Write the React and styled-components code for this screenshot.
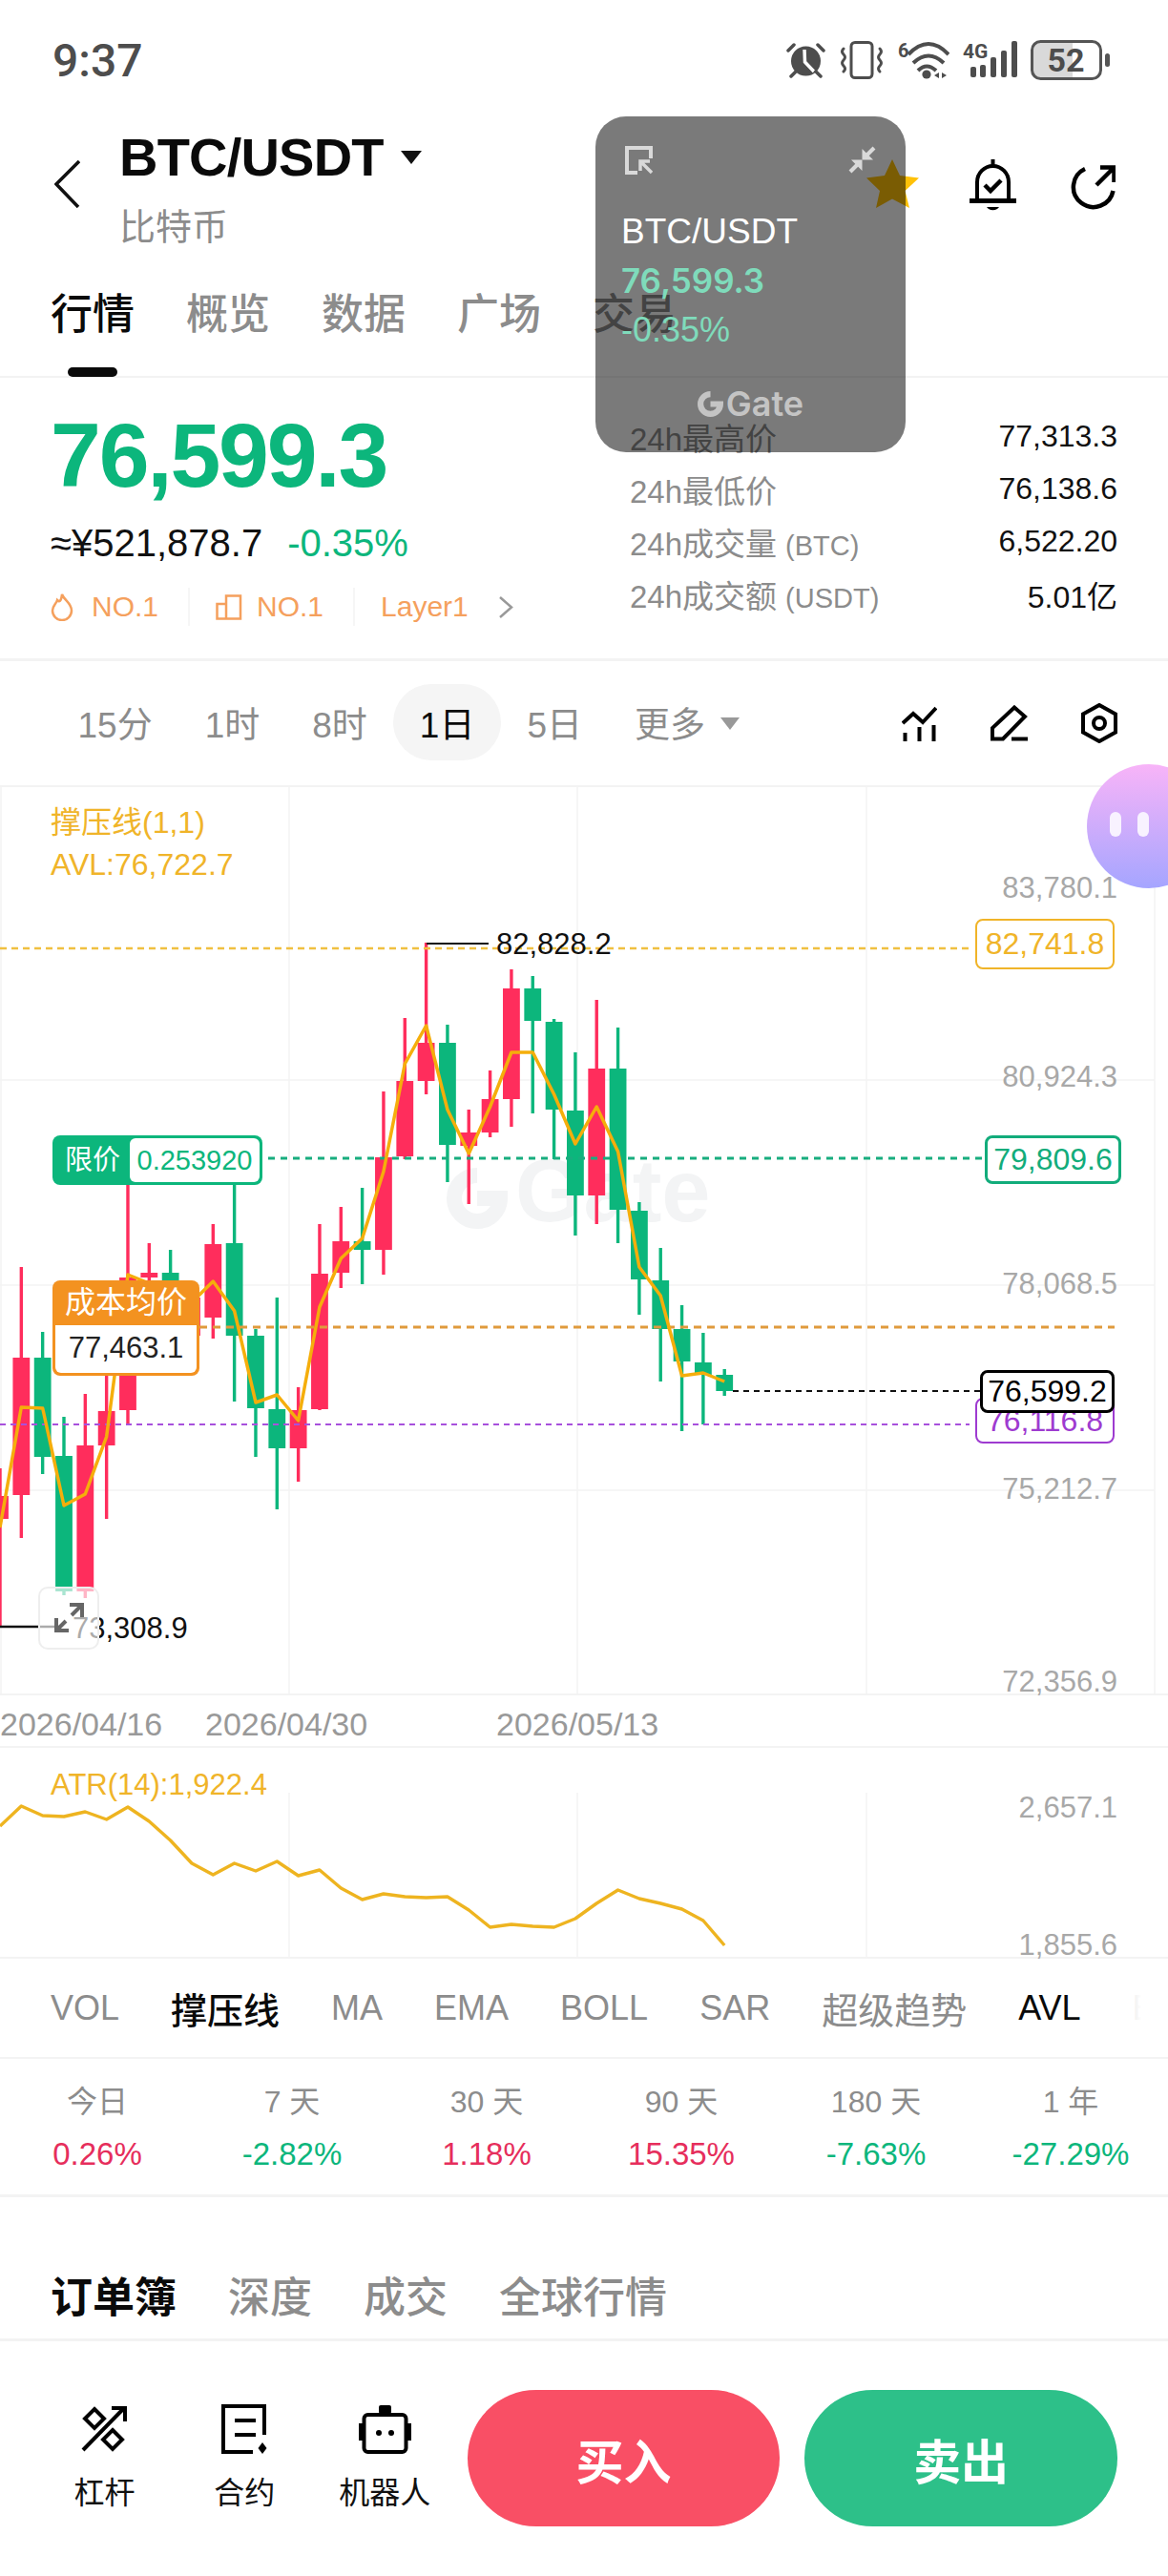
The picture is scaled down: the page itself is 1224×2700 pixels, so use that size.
import React from 'react';
import styled, { createGlobalStyle } from 'styled-components';

const SANS = `"Liberation Sans", "Noto Sans CJK SC", sans-serif`;
const GREEN = '#0cb67c';
const RED = '#ff2d5c';
const AMBER = '#f0b429';
const GRAY = '#8c8c8c';

const Global = createGlobalStyle`
  * { box-sizing: border-box; }
  html, body { margin: 0; padding: 0; background: #fff; }
  body { font-family: ${SANS}; }
`;

const Page = styled.div`
  position: relative;
  width: 1224px;
  height: 2700px;
  overflow: hidden;
  background: #fff;
  color: #111;
`;

/* ---------- status bar ---------- */
const StatusBar = styled.div`
  display: flex;
  justify-content: space-between;
  align-items: flex-start;
  height: 122px;
  padding: 42px 61px 0 55px;
`;
const Time = styled.div`
  font: 500 48px/50px Roboto, sans-serif;
  color: #4d4d4d;
  margin-top: -3px;
`;
const StatusIcons = styled.div`
  display: flex;
  align-items: center;
  gap: 14px;
  height: 42px;
`;

const AlarmIcon = () => (
  <svg width="41" height="38" viewBox="0 0 41 38" fill="none">
    <circle cx="20.5" cy="20" r="15.5" fill="#4d4d4d" />
    <path d="M19 8 L19.5 21 L29 31" stroke="#fff" strokeWidth="3.5" />
    <path d="M2 9 L8 3 M33 3 L39 9 M5 36 L10 31 M36 36 L31 31" stroke="#4d4d4d" strokeWidth="3.5" strokeLinecap="round" />
  </svg>
);
const VibrateIcon = () => (
  <svg width="48" height="40" viewBox="0 0 48 40" fill="none" stroke="#4d4d4d" strokeWidth="3">
    <rect x="13" y="1.5" width="22" height="37" rx="4" />
    <path d="M5 8 q-3 3 0 6 q3 3 0 6 q-3 3 0 6 q3 3 0 6" strokeLinecap="round" />
    <path d="M43 8 q3 3 0 6 q-3 3 0 6 q3 3 0 6 q-3 3 0 6" strokeLinecap="round" />
  </svg>
);
const WifiIcon = () => (
  <svg width="54" height="40" viewBox="0 0 54 40" fill="none">
    <text x="0" y="17" fontFamily="Roboto, sans-serif" fontWeight="700" fontSize="20" fill="#4d4d4d">6</text>
    <path d="M11 14 Q32 -8 53 14 M16 23 Q32 8 48 23 M21 31 Q30 22 40 31" stroke="#4d4d4d" strokeWidth="4" />
    <circle cx="30" cy="35" r="4.6" fill="#4d4d4d" />
    <path d="M43 33 V39 L38 36 Z M46 33 V39 L51 36 Z" fill="#4d4d4d" />
  </svg>
);
const SignalIcon = () => (
  <svg width="57" height="40" viewBox="0 0 57 40" fill="#4d4d4d">
    <text x="0" y="18" fontFamily="Roboto, sans-serif" fontWeight="700" fontSize="21">4G</text>
    <rect x="8" y="27" width="6" height="11" rx="2" />
    <rect x="18" y="25" width="6" height="13" rx="2" />
    <rect x="29" y="17" width="6" height="21" rx="2" />
    <rect x="40" y="10" width="6" height="28" rx="2" />
    <rect x="51" y="0" width="6" height="38" rx="2" />
  </svg>
);
const BatteryIcon = () => (
  <svg width="83" height="42" viewBox="0 0 83 42">
    <path d="M10 2 H44 V40 H10 Q2 40 2 32 V10 Q2 2 10 2 Z" fill="#d9d9d9" />
    <rect x="1.5" y="1.5" width="72" height="39" rx="9" fill="none" stroke="#555" strokeWidth="3" />
    <text x="37" y="33" textAnchor="middle" fontFamily="Roboto, sans-serif" fontWeight="700" fontSize="34" fill="#4d4d4d">52</text>
    <rect x="78" y="14" width="5" height="14" rx="2.5" fill="#555" />
  </svg>
);

/* ---------- header ---------- */
const Header = styled.header`
  display: flex;
  align-items: flex-start;
  height: 178px;
  padding: 13px 55px 0 57px;
`;
const BackIcon = styled.svg`
  margin-top: 33px;
  margin-right: 41px;
  flex: none;
`;
const TitleBlock = styled.div`
  display: flex;
  flex-direction: column;
`;
const TitleRow = styled.div`
  display: flex;
  align-items: center;
  gap: 18px;
`;
const Title = styled.div`
  font-size: 56px;
  line-height: 60px;
  font-weight: 700;
  letter-spacing: -0.8px;
  color: #0a0a0a;
`;
const Caret = styled.span`
  width: 0;
  height: 0;
  border-left: ${p => p.$w}px solid transparent;
  border-right: ${p => p.$w}px solid transparent;
  border-top: ${p => p.$h}px solid ${p => p.$color};
  margin-top: ${p => p.$mt || 0}px;
`;
const Subtitle = styled.div`
  margin-top: 21px;
  font-size: 38px;
  line-height: 44px;
  color: ${GRAY};
`;
const Actions = styled.div`
  display: flex;
  align-items: flex-start;
  margin-left: auto;
  padding-top: 32px;
`;
const ActionSlot = styled.div`
  display: flex;
  margin-left: ${p => p.$ml || 0}px;
  margin-top: ${p => p.$mt || 0}px;
`;

const StarIcon = () => (
  <svg width="55" height="51" viewBox="0 0 55 51">
    <path d="M27 0 L35 17 L55 19.5 L40.5 33 L45 51 L27 41.5 L10 51 L14 33 L0 19.5 L19 17 Z" fill="#ffc107" />
  </svg>
);
const BellIcon = () => (
  <svg width="49" height="55" viewBox="0 0 49 55" fill="none" stroke="#000">
    <path d="M8 42 V24 a16.5 17 0 0 1 33 0 V42" strokeWidth="4" />
    <path d="M0 43.5 H49" strokeWidth="5" />
    <path d="M24.5 0 V6" strokeWidth="4" />
    <path d="M16 27 L22 33 L33 22" strokeWidth="4.5" />
    <path d="M18 50 H31 A7 5 0 0 1 18 50 Z" fill="#000" strokeWidth="0" />
  </svg>
);
const ShareIcon = () => (
  <svg width="47" height="47" viewBox="0 0 47 47" fill="none" stroke="#000" strokeWidth="4.5">
    <path d="M15 4 A21 21 0 1 0 44.5 27" />
    <path d="M27 21 L45 3 M31 2.5 H45.5 V18" />
  </svg>
);

/* ---------- tabs ---------- */
const Tabs = styled.nav`
  display: flex;
  align-items: flex-start;
  gap: 54px;
  height: 96px;
  padding-left: 53px;
  border-bottom: 2px solid #f3f3f3;
`;
const Tab = styled.div`
  position: relative;
  font-size: 44px;
  line-height: 60px;
  font-weight: 500;
  color: ${p => (p.$active ? '#0a0a0a' : GRAY)};
`;
const TabMark = styled.span`
  position: absolute;
  left: 18px;
  top: 85px;
  width: 52px;
  height: 10px;
  border-radius: 5px;
  background: #0a0a0a;
`;

/* ---------- price ---------- */
const PriceSection = styled.section`
  display: flex;
  justify-content: space-between;
  height: 297px;
  padding: 31px 53px 0;
  border-bottom: 3px solid #f3f3f3;
`;
const PriceColumn = styled.div`
  display: flex;
  flex-direction: column;
`;
const BigPrice = styled.div`
  font-size: 95px;
  line-height: 100px;
  font-weight: 700;
  letter-spacing: -2.2px;
  color: ${GREEN};
`;
const FiatRow = styled.div`
  display: flex;
  gap: 26px;
  margin-top: 20px;
  font-size: 40px;
  line-height: 44px;
`;
const FiatChange = styled.span`
  color: ${GREEN};
`;
const TagRow = styled.div`
  display: flex;
  align-items: center;
  margin-top: 25px;
  height: 40px;
`;
const RankTag = styled.div`
  display: flex;
  align-items: center;
  gap: ${p => p.$gap}px;
  font-size: 30px;
  line-height: 40px;
  color: #f5a05d;
  padding-right: 31px;
  margin-right: 27px;
  border-right: 2px solid #f6f6f6;
  &:last-child { border: 0; margin: 0; padding: 0; }
`;
const StatsTable = styled.div`
  display: flex;
  flex-direction: column;
  width: 511px;
  padding-top: 3px;
`;
const StatRow = styled.div`
  display: flex;
  justify-content: space-between;
  align-items: center;
  height: 55px;
  font-size: 32px;
`;
const StatLabel = styled.span`
  font-size: 33px;
  color: ${GRAY};
`;
const StatValue = styled.span`
  color: #111;
`;
const StatUnit = styled.span`
  font-size: 29px;
  margin-left: 9px;
`;

/* ---------- toolbar ---------- */
const Toolbar = styled.div`
  display: flex;
  align-items: center;
  height: 132px;
  padding: 0 53px 0 54px;
  border-bottom: 2px solid #f3f3f3;
`;
const Interval = styled.div`
  display: flex;
  align-items: center;
  gap: 16px;
  height: 80px;
  padding: 0 27.5px;
  margin-top: -2px;
  font-size: 37px;
  border-radius: 40px;
  color: ${p => (p.$active ? '#0a0a0a' : GRAY)};
  background: ${p => (p.$active ? '#f5f5f5' : 'transparent')};
`;
const ToolIcons = styled.div`
  display: flex;
  align-items: center;
  gap: 56px;
  margin-left: auto;
`;

const IndicatorToolIcon = () => (
  <svg width="37" height="37" viewBox="0 0 37 37" fill="none" stroke="#000" strokeWidth="4">
    <path d="M1 18 L12 8 L22 17 L36 2" />
    <path d="M3.5 28 V37 M18.5 22 V37 M33.5 20 V37" />
  </svg>
);
const PenIcon = () => (
  <svg width="39" height="38" viewBox="0 0 39 38" fill="none" stroke="#000" strokeWidth="4">
    <path d="M25 2.5 L36 12 L13 35.5 H2 V24 Z" />
    <path d="M22 35.5 H39" />
  </svg>
);
const HexIcon = () => (
  <svg width="38" height="42" viewBox="0 0 38 42" fill="none" stroke="#000" strokeWidth="4">
    <path d="M19 2 L36 11.5 V30.5 L19 40 L2 30.5 V11.5 Z" />
    <circle cx="19" cy="21" r="6" />
  </svg>
);

/* ---------- chart ---------- */
const ChartArea = styled.div`
  position: relative;
  height: 952px;
  border-bottom: 2px solid #f3f3f3;
`;
const ChartSvg = styled.svg`
  position: absolute;
  inset: 0;
  display: block;
`;
const LegendBlock = styled.div`
  position: absolute;
  left: 53px;
  top: 15px;
  font-size: 32px;
  line-height: 44px;
  color: ${AMBER};
`;
const AxisValue = styled.div`
  position: absolute;
  right: 53px;
  top: ${p => p.$y}px;
  transform: translateY(-50%);
  font-size: 31px;
  line-height: 36px;
  color: #a8a8a8;
`;
const ExtremeValue = styled.div`
  position: absolute;
  left: ${p => p.$x}px;
  top: ${p => p.$y}px;
  transform: translateY(-50%);
  font-size: 31px;
  line-height: 36px;
  color: #111;
`;
const PriceTag = styled.div`
  position: absolute;
  left: ${p => p.$x}px;
  top: ${p => p.$y}px;
  width: ${p => p.$w}px;
  height: ${p => p.$h}px;
  display: flex;
  align-items: center;
  justify-content: center;
  font-size: 32px;
  color: ${p => p.$color};
  background: #fff;
  border: ${p => p.$bw || 2}px solid ${p => p.$color};
  border-radius: 8px;
`;
const LimitTag = styled.div`
  position: absolute;
  left: 55px;
  top: 365px;
  display: flex;
  width: 220px;
  height: 52px;
  background: ${GREEN};
  border-radius: 8px;
  padding: 3px;
`;
const LimitName = styled.div`
  width: 78px;
  font-size: 29px;
  line-height: 46px;
  color: #fff;
  text-align: center;
`;
const LimitValue = styled.div`
  flex: 1;
  font-size: 29px;
  line-height: 46px;
  color: ${GREEN};
  background: #fff;
  border-radius: 6px;
  text-align: center;
`;
const CostTag = styled.div`
  position: absolute;
  left: 55px;
  top: 517px;
  display: flex;
  flex-direction: column;
  width: 154px;
  height: 100px;
  background: #f39220;
  border-radius: 8px;
  padding: 0 3px 3px;
`;
const CostName = styled.div`
  height: 47px;
  font-size: 32px;
  line-height: 47px;
  color: #fff;
  text-align: center;
`;
const CostValue = styled.div`
  flex: 1;
  font-size: 31px;
  line-height: 47px;
  color: #222;
  background: #fff;
  border-radius: 0 0 6px 6px;
  text-align: center;
`;
const ExpandButton = styled.div`
  position: absolute;
  left: 40px;
  top: 838px;
  width: 64px;
  height: 66px;
  display: flex;
  align-items: center;
  justify-content: center;
  background: rgba(255, 255, 255, 0.65);
  border: 2px solid #eee;
  border-radius: 10px;
`;

const candles = [
  ['r', 1539, 1568, 1592, 1705], ['r', 1328, 1423, 1567, 1612], ['g', 1396, 1423, 1527, 1545],
  ['g', 1485, 1526, 1668, 1672], ['r', 1461, 1515, 1668, 1675], ['r', 1400, 1479, 1515, 1592],
  ['r', 1200, 1339, 1478, 1493], ['r', 1303, 1334, 1339, 1345], ['g', 1310, 1334, 1380, 1395],
  ['r', 1350, 1360, 1400, 1405], ['r', 1283, 1304, 1381, 1403], ['g', 1200, 1303, 1400, 1469],
  ['g', 1393, 1400, 1476, 1527], ['g', 1360, 1477, 1518, 1582], ['r', 1454, 1478, 1518, 1553],
  ['r', 1283, 1335, 1477, 1478], ['r', 1265, 1301, 1334, 1350], ['g', 1245, 1301, 1310, 1346],
  ['r', 1144, 1213, 1310, 1336], ['r', 1067, 1133, 1212, 1215], ['r', 988, 1093, 1133, 1147],
  ['g', 1074, 1093, 1200, 1239], ['r', 1163, 1187, 1201, 1262], ['r', 1122, 1152, 1187, 1192],
  ['r', 1016, 1036, 1152, 1181], ['g', 1023, 1036, 1070, 1167], ['g', 1068, 1071, 1163, 1215],
  ['g', 1103, 1164, 1253, 1295], ['r', 1048, 1120, 1253, 1283], ['g', 1077, 1120, 1268, 1303],
  ['g', 1260, 1269, 1341, 1378], ['g', 1308, 1342, 1393, 1448], ['g', 1368, 1393, 1427, 1500],
  ['g', 1397, 1428, 1441, 1493], ['g', 1435, 1441, 1458, 1463],
];
const STEP = 22.33;
const pointsOf = ys => ys.map((y, k) => `${(k * STEP).toFixed(1)},${y}`).join(' ');
const avl = [1601, 1475, 1476, 1578, 1566, 1506, 1336, 1345, 1350, 1365, 1343, 1374, 1470, 1462, 1489, 1370, 1319, 1298, 1228, 1115, 1075, 1163, 1209, 1160, 1103, 1103, 1147, 1199, 1160, 1207, 1328, 1358, 1442, 1439, 1448];
const atr = [1914, 1893, 1903, 1904, 1899, 1907, 1894, 1909, 1929, 1953, 1965, 1953, 1961, 1951, 1966, 1960, 1979, 1991, 1985, 1988, 1989, 1988, 2002, 2020, 2017, 2019, 2020, 2011, 1995, 1981, 1990, 1995, 2001, 2013, 2039];

const GateGlyph = ({ size, color }) => (
  <svg width={size} height={size} viewBox="0 0 26 26" fill="none" stroke={color} strokeWidth="6">
    <path d="M13 3 A10 10 0 1 0 23 13 H13" />
  </svg>
);

const PriceChart = () => (
  <ChartSvg width="1224" height="950" viewBox="0 825 1224 950">
    <g stroke="#f3f3f3" strokeWidth="1.5">
      {[1132, 1347, 1562].map(y => <line key={y} x1="0" x2="1210" y1={y} y2={y} />)}
      {[1, 303, 605, 908, 1210].map(x => <line key={x} x1={x} x2={x} y1="825" y2="1777" />)}
    </g>
    <g fill="none" stroke="#f3f4f5" strokeWidth="16">
      <path d="M500 1232 A24 24 0 1 0 524 1256 H500" />
    </g>
    <text x="540" y="1280" fontFamily={SANS} fontWeight="700" fontSize="92" fill="#f3f4f5">Gate</text>
    {candles.map(([c, wt, bt, bb, wb], k) => {
      const x = k * STEP;
      const fill = c === 'g' ? GREEN : RED;
      return (
        <g key={k} fill={fill}>
          <rect x={x - 1.7} y={wt} width="3.4" height={wb - wt} />
          <rect x={x - 8.9} y={bt} width="17.8" height={bb - bt} />
        </g>
      );
    })}
    <line x1="0" x2="1015" y1="994" y2="994" stroke="#f0c040" strokeWidth="2.5" strokeDasharray="7 5" />
    <line x1="281" x2="1032" y1="1214" y2="1214" stroke="#18ad7f" strokeWidth="3" strokeDasharray="7 6" />
    <line x1="209" x2="1168" y1="1391" y2="1391" stroke="#e09a3c" strokeWidth="3" strokeDasharray="8 6" />
    <line x1="0" x2="1016" y1="1493" y2="1493" stroke="#a850dc" strokeWidth="2.2" strokeDasharray="6 5" />
    <line x1="768" x2="1027" y1="1458" y2="1458" stroke="#111" strokeWidth="2.2" strokeDasharray="6 5" />
    <polyline points={pointsOf(avl)} fill="none" stroke="#f5ae0b" strokeWidth="3.5" strokeLinejoin="round" />
    <path d="M447 989 H512" stroke="#111" strokeWidth="2" />
    <path d="M0 1705 H62" stroke="#111" strokeWidth="2.5" />
  </ChartSvg>
);

/* ---------- axis + ATR ---------- */
const DateAxis = styled.div`
  position: relative;
  height: 55px;
  border-bottom: 2px solid #f3f3f3;
`;
const DateLabel = styled.span`
  position: absolute;
  left: ${p => p.$x}px;
  top: 10px;
  font-size: 34px;
  line-height: 40px;
  color: #999;
`;
const AtrPanel = styled.div`
  position: relative;
  height: 221px;
  border-bottom: 2px solid #f3f3f3;
`;
const AtrLegend = styled.div`
  position: absolute;
  left: 53px;
  top: 21px;
  font-size: 31px;
  line-height: 36px;
  color: ${AMBER};
`;

/* ---------- indicators ---------- */
const IndicatorBar = styled.div`
  position: relative;
  display: flex;
  align-items: center;
  gap: 54px;
  height: 105px;
  padding-left: 53px;
  overflow: hidden;
  white-space: nowrap;
  border-bottom: 2px solid #f3f3f3;
`;
const Indicator = styled.span`
  font-size: ${p => (p.$cjk ? 38 : 36)}px;
  color: ${p => (p.$on ? '#0a0a0a' : GRAY)};
  font-weight: ${p => (p.$on && p.$cjk ? 500 : 400)};
`;
const IndicatorFade = styled.div`
  position: absolute;
  right: 0;
  top: 0;
  bottom: 0;
  width: 40px;
  background: linear-gradient(90deg, rgba(255,255,255,.8), #fff 30%);
`;

/* ---------- change grid ---------- */
const ChangeGrid = styled.div`
  display: grid;
  grid-template-columns: repeat(6, 204px);
  height: 145px;
  padding-top: 25px;
  border-bottom: 3px solid #f3f3f3;
`;
const ChangeCell = styled.div`
  display: flex;
  flex-direction: column;
  align-items: center;
  gap: 15px;
`;
const ChangeLabel = styled.span`
  font-size: 32px;
  line-height: 40px;
  color: ${GRAY};
`;
const ChangeValue = styled.span`
  font-size: 33px;
  line-height: 40px;
  color: ${p => (p.$up ? '#e62e5c' : GREEN)};
`;

/* ---------- order tabs ---------- */
const OrderTabs = styled.nav`
  display: flex;
  gap: 54px;
  height: 151px;
  padding: 77px 0 0 53px;
  border-bottom: 3px solid #f3f3f3;
`;
const OrderTab = styled.div`
  font-size: 44px;
  line-height: 58px;
  font-weight: ${p => (p.$active ? 700 : 500)};
  color: ${p => (p.$active ? '#0a0a0a' : GRAY)};
`;

/* ---------- bottom bar ---------- */
const BottomBar = styled.div`
  display: flex;
  align-items: flex-start;
  padding: 51px 53px 0 36px;
`;
const ToolItem = styled.div`
  display: flex;
  flex-direction: column;
  align-items: center;
  width: 147px;
  margin-top: 15px;
`;
const ToolIconBox = styled.div`
  display: flex;
  align-items: center;
  justify-content: center;
  height: 52px;
`;
const ToolLabel = styled.span`
  margin-top: 21px;
  font-size: 32px;
  line-height: 40px;
  color: #111;
`;
const TradeButton = styled.div`
  display: flex;
  align-items: center;
  justify-content: center;
  width: 328px;
  height: 143px;
  margin-left: ${p => p.$ml}px;
  border-radius: 72px;
  font-size: 50px;
  font-weight: 700;
  color: #fff;
  background: ${p => p.$color};
`;

const LeverageIcon = () => (
  <svg width="48" height="50" viewBox="0 0 48 50" fill="none" stroke="#000" strokeWidth="4">
    <path d="M2 47 L45 3" />
    <path d="M32 3 H46 V17" />
    <path d="M14 4 L24 14 L14 24 L4 14 Z" />
    <path d="M33 26 L43 36 L33 46 L23 36 Z" />
  </svg>
);
const ContractIcon = () => (
  <svg width="48" height="52" viewBox="0 0 48 52" fill="none" stroke="#000" strokeWidth="4">
    <path d="M45 32 V2 H2 V50 H33" />
    <path d="M14 17 H36 M14 32 H36" />
    <path d="M43 40 L47.5 46 L43 52 L38.5 46 Z" fill="#000" strokeWidth="0" />
  </svg>
);
const RobotIcon = () => (
  <svg width="55" height="51" viewBox="0 0 55 51" fill="none" stroke="#000">
    <rect x="21" y="0" width="13" height="9" rx="2" fill="#000" strokeWidth="0" />
    <rect x="5.5" y="10" width="44" height="39" rx="4" strokeWidth="4" />
    <path d="M2 19 V37 M53 19 V37" strokeWidth="4" />
    <circle cx="21" cy="29" r="3" fill="#000" strokeWidth="0" />
    <circle cx="34" cy="29" r="3" fill="#000" strokeWidth="0" />
  </svg>
);

/* ---------- overlays ---------- */
const PipCard = styled.aside`
  position: absolute;
  left: 624px;
  top: 122px;
  width: 325px;
  height: 352px;
  display: flex;
  flex-direction: column;
  padding: 31px 27px 0;
  border-radius: 32px;
  background: rgba(0, 0, 0, 0.52);
`;
const PipControls = styled.div`
  display: flex;
  justify-content: space-between;
  padding: 0 4px;
`;
const PipName = styled.div`
  margin-top: 38px;
  font-size: 37px;
  line-height: 44px;
  color: #fff;
`;
const PipPrice = styled.div`
  margin-top: 7px;
  font: 600 35px/44px Inter, sans-serif;
  color: #7fdbbb;
`;
const PipChange = styled.div`
  margin-top: 8px;
  font-size: 36px;
  line-height: 44px;
  color: #7fdbbb;
`;
const PipBrand = styled.div`
  display: flex;
  align-items: center;
  justify-content: center;
  gap: 3px;
  margin-top: 40px;
  font: 600 36px/30px Inter, sans-serif;
  color: #c4c4c4;
`;
const Bubble = styled.div`
  position: absolute;
  left: 1139px;
  top: 801px;
  width: 130px;
  height: 130px;
  border-radius: 50%;
  background: linear-gradient(180deg, #f8b4f8, #a5a5ff);
  display: flex;
  gap: 17px;
  padding: 50px 0 0 24px;
`;
const BubbleEye = styled.span`
  width: 12px;
  height: 26px;
  border-radius: 6px;
  background: #f8f2ff;
`;

const PipIconA = () => (
  <svg width="29" height="30" viewBox="0 0 29 30" fill="none" stroke="#d9d9d9" strokeWidth="4">
    <path d="M13 28 H2 V2 H27 V13" />
    <path d="M28 28 L16 16 M16 26 V16 H26" strokeWidth="3.5" />
  </svg>
);
const PipIconB = () => (
  <svg width="29" height="29" viewBox="0 0 29 29" fill="#d9d9d9" stroke="#d9d9d9">
    <path d="M27 2 L18 11" strokeWidth="4" fill="none" />
    <path d="M14.5 3 V14.5 H26 Z" strokeWidth="0" />
    <path d="M2 27 L11 18" strokeWidth="4" fill="none" />
    <path d="M14.5 26 V14.5 H3 Z" strokeWidth="0" />
  </svg>
);

const ExpandIcon = () => (
  <svg width="34" height="34" viewBox="0 0 34 34" fill="none" stroke="#666" strokeWidth="4">
    <path d="M4 30 L14 20 M4 17 V30 H17" />
    <path d="M31 3 L20 14 M18 3 H31 V16" />
  </svg>
);

const intervals = ['15分', '1时', '8时', '1日', '5日'];
const stats = [
  ['24h最高价', '', '77,313.3'],
  ['24h最低价', '', '76,138.6'],
  ['24h成交量', '(BTC)', '6,522.20'],
  ['24h成交额', '(USDT)', '5.01亿'],
];
const indicators = [
  ['VOL'], ['撑压线', true, true], ['MA'], ['EMA'], ['BOLL'], ['SAR'], ['超级趋势', false, true], ['AVL', true], ['BBI'],
];
const changes = [
  ['今日', '0.26%', true], ['7 天', '-2.82%'], ['30 天', '1.18%', true],
  ['90 天', '15.35%', true], ['180 天', '-7.63%'], ['1 年', '-27.29%'],
];

export default function App() {
  return (
    <Page>
      <Global />
      <StatusBar>
        <Time>9:37</Time>
        <StatusIcons>
          <AlarmIcon />
          <VibrateIcon />
          <WifiIcon />
          <SignalIcon />
          <BatteryIcon />
        </StatusIcons>
      </StatusBar>

      <Header>
        <BackIcon width="27" height="50" viewBox="0 0 27 50" fill="none" stroke="#111" strokeWidth="3.5">
          <path d="M26 1 L2 25 L25 49" />
        </BackIcon>
        <TitleBlock>
          <TitleRow>
            <Title>BTC/USDT</Title>
            <Caret $w={11} $h={14} $color="#111" />
          </TitleRow>
          <Subtitle>比特币</Subtitle>
        </TitleBlock>
        <Actions>
          <ActionSlot><StarIcon /></ActionSlot>
          <ActionSlot $ml={53}><BellIcon /></ActionSlot>
          <ActionSlot $ml={57} $mt={6}><ShareIcon /></ActionSlot>
        </Actions>
      </Header>

      <Tabs>
        <Tab $active>行情<TabMark /></Tab>
        <Tab>概览</Tab>
        <Tab>数据</Tab>
        <Tab>广场</Tab>
        <Tab>交易</Tab>
      </Tabs>

      <PriceSection>
        <PriceColumn>
          <BigPrice>76,599.3</BigPrice>
          <FiatRow>≈¥521,878.7<FiatChange>-0.35%</FiatChange></FiatRow>
          <TagRow>
            <RankTag $gap={18}>
              <svg width="25" height="30" viewBox="0 0 25 30" fill="none" stroke="#f5a05d" strokeWidth="2.5">
                <path d="M12 2 C14 8 22 11 22 19 A10 10 0 0 1 2 19 C2 14 6 12 7 8 C9 10 11 10 12 2 Z" />
              </svg>
              NO.1
            </RankTag>
            <RankTag $gap={15}>
              <svg width="28" height="27" viewBox="0 0 28 27" fill="none" stroke="#f5a05d" strokeWidth="2.5">
                <path d="M1.5 10 H11 V25.5 H1.5 Z M11 1.5 H26 V25.5 H11 Z" />
              </svg>
              NO.1
            </RankTag>
            <RankTag $gap={31}>
              Layer1
              <svg width="16" height="23" viewBox="0 0 16 23" fill="none" stroke="#999" strokeWidth="2.5">
                <path d="M2 1 L14 11.5 L2 22" />
              </svg>
            </RankTag>
          </TagRow>
        </PriceColumn>
        <StatsTable>
          {stats.map(([label, unit, value]) => (
            <StatRow key={label}>
              <StatLabel>{label}{unit && <StatUnit>{unit}</StatUnit>}</StatLabel>
              <StatValue>{value}</StatValue>
            </StatRow>
          ))}
        </StatsTable>
      </PriceSection>

      <Toolbar>
        {intervals.map(label => (
          <Interval key={label} $active={label === '1日'}>{label}</Interval>
        ))}
        <Interval>更多<Caret $w={10} $h={13} $color="#999" $mt={2} /></Interval>
        <ToolIcons>
          <IndicatorToolIcon />
          <PenIcon />
          <HexIcon />
        </ToolIcons>
      </Toolbar>

      <ChartArea>
        <PriceChart />
        <LegendBlock>撑压线(1,1)<br />AVL:76,722.7</LegendBlock>
        <AxisValue $y={106}>83,780.1</AxisValue>
        <AxisValue $y={304}>80,924.3</AxisValue>
        <AxisValue $y={521}>78,068.5</AxisValue>
        <AxisValue $y={736}>75,212.7</AxisValue>
        <AxisValue $y={938}>72,356.9</AxisValue>
        <ExtremeValue $x={520} $y={165}>82,828.2</ExtremeValue>
        <ExtremeValue $x={76} $y={882}>73,308.9</ExtremeValue>
        <PriceTag $x={1022} $y={138} $w={146} $h={53} $color={AMBER}>82,741.8</PriceTag>
        <PriceTag $x={1032} $y={365} $w={143} $h={51} $color="#12ac7b" $bw={3}>79,809.6</PriceTag>
        <PriceTag $x={1022} $y={640} $w={146} $h={48} $color="#9e3bd0">76,116.8</PriceTag>
        <PriceTag $x={1027} $y={611} $w={141} $h={45} $color="#000" $bw={3}>76,599.2</PriceTag>
        <LimitTag>
          <LimitName>限价</LimitName>
          <LimitValue>0.253920</LimitValue>
        </LimitTag>
        <CostTag>
          <CostName>成本均价</CostName>
          <CostValue>77,463.1</CostValue>
        </CostTag>
        <ExpandButton><ExpandIcon /></ExpandButton>
      </ChartArea>

      <DateAxis>
        <DateLabel $x={0}>2026/04/16</DateLabel>
        <DateLabel $x={215}>2026/04/30</DateLabel>
        <DateLabel $x={520}>2026/05/13</DateLabel>
      </DateAxis>

      <AtrPanel>
        <ChartSvg width="1224" height="219" viewBox="0 1832 1224 219">
          <g stroke="#f3f3f3" strokeWidth="1.5">
            {[303, 605, 908].map(x => <line key={x} x1={x} x2={x} y1="1879" y2="2053" />)}
          </g>
          <polyline points={pointsOf(atr)} fill="none" stroke="#eeb420" strokeWidth="3.4" strokeLinejoin="round" />
        </ChartSvg>
        <AtrLegend>ATR(14):1,922.4</AtrLegend>
        <AxisValue $y={63}>2,657.1</AxisValue>
        <AxisValue $y={207}>1,855.6</AxisValue>
      </AtrPanel>

      <IndicatorBar>
        {indicators.map(([label, on, cjk]) => (
          <Indicator key={label} $on={on} $cjk={cjk}>{label}</Indicator>
        ))}
        <IndicatorFade />
      </IndicatorBar>

      <ChangeGrid>
        {changes.map(([label, value, up]) => (
          <ChangeCell key={label}>
            <ChangeLabel>{label}</ChangeLabel>
            <ChangeValue $up={up}>{value}</ChangeValue>
          </ChangeCell>
        ))}
      </ChangeGrid>

      <OrderTabs>
        <OrderTab $active>订单簿</OrderTab>
        <OrderTab>深度</OrderTab>
        <OrderTab>成交</OrderTab>
        <OrderTab>全球行情</OrderTab>
      </OrderTabs>

      <BottomBar>
        <ToolItem><ToolIconBox><LeverageIcon /></ToolIconBox><ToolLabel>杠杆</ToolLabel></ToolItem>
        <ToolItem><ToolIconBox><ContractIcon /></ToolIconBox><ToolLabel>合约</ToolLabel></ToolItem>
        <ToolItem><ToolIconBox><RobotIcon /></ToolIconBox><ToolLabel>机器人</ToolLabel></ToolItem>
        <TradeButton $ml={13} $color="#f94f65">买入</TradeButton>
        <TradeButton $ml={26} $color="#2dc089">卖出</TradeButton>
      </BottomBar>

      <PipCard>
        <PipControls>
          <PipIconA />
          <PipIconB />
        </PipControls>
        <PipName>BTC/USDT</PipName>
        <PipPrice>76,599.3</PipPrice>
        <PipChange>-0.35%</PipChange>
        <PipBrand><GateGlyph size={27} color="#c4c4c4" />Gate</PipBrand>
      </PipCard>

      <Bubble>
        <BubbleEye />
        <BubbleEye />
      </Bubble>
    </Page>
  );
}
